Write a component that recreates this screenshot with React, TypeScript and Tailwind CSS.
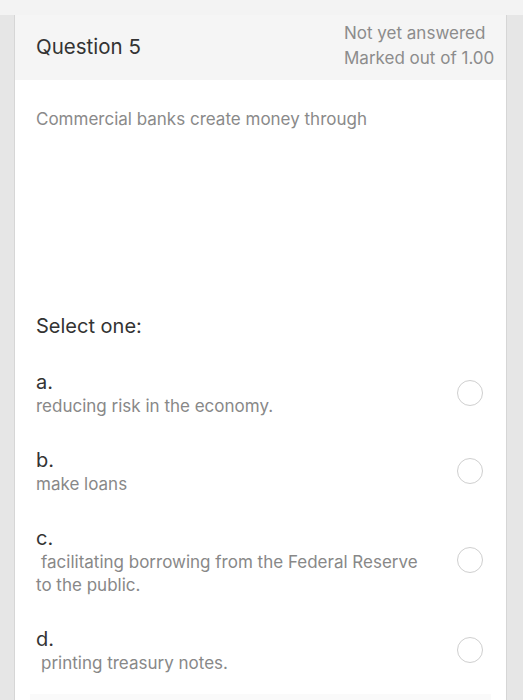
import React from "react";

const Radio = () => (
  <div className="w-[26px] h-[26px] rounded-full border-[1.5px] border-[#cfcfcf] bg-white shrink-0" />
);

const Option = ({ letter, text }: { letter: string; text: React.ReactNode }) => (
  <div className="flex items-center justify-between">
    <div className="flex flex-col">
      <div className="text-[20px] leading-[26px] text-[#333]">{letter}</div>
      <div className="text-[17px] leading-[23px] text-[#888]">{text}</div>
    </div>
    <div className="mr-[23px] mt-[-2px]">
      <Radio />
    </div>
  </div>
);

export default function App() {
  return (
    <div
      className="w-[523px] h-[700px] overflow-hidden bg-[#f3f3f3] flex flex-col"
      style={{ fontFamily: 'Inter, "Liberation Sans", Arial, sans-serif' }}
    >
      <div className="h-[15px] shrink-0" />
      <div className="flex-1 flex bg-[#e6e6e6]">
        <div className="w-[14px] shrink-0" />
        <div className="w-[493px] shrink-0 flex flex-col bg-white border-l border-r border-[#d6d6d6]">
          <div className="h-[65px] bg-[#f5f5f5] flex items-center justify-between pl-[21px]">
            <div className="text-[20.5px] text-[#333] mt-[-1px]">Question 5</div>
            <div className="flex flex-col text-[17px] leading-[25px] text-[#8c8c8c] mt-[-4px] w-[162px]">
              <span>Not yet answered</span>
              <span>Marked out of 1.00</span>
            </div>
          </div>
          <div className="pl-[21px] pt-[27px] text-[17px] leading-[24px] text-[#8a8a8a]">
            Commercial banks create money through
          </div>
          <div className="pl-[21px] pt-[182px] text-[20px] leading-[26px] text-[#333]">Select one:</div>
          <div className="pl-[21px] pt-[30px] flex flex-col">
            <Option letter="a." text="reducing risk in the economy." />
            <div className="h-[29px]" />
            <Option letter="b." text="make loans" />
            <div className="h-[29px]" />
            <Option
              letter="c."
              text={
                <>
                  <span className="pl-[5px]">facilitating borrowing from the Federal Reserve</span>
                  <br />
                  to the public.
                </>
              }
            />
            <div className="h-[29px]" />
            <Option letter="d." text={<span className="pl-[5px]">printing treasury notes.</span>} />
          </div>
          <div className="mt-auto mx-[15px] h-[6px] bg-[#fafafa]" />
        </div>
        <div className="flex-1" />
      </div>
    </div>
  );
}
